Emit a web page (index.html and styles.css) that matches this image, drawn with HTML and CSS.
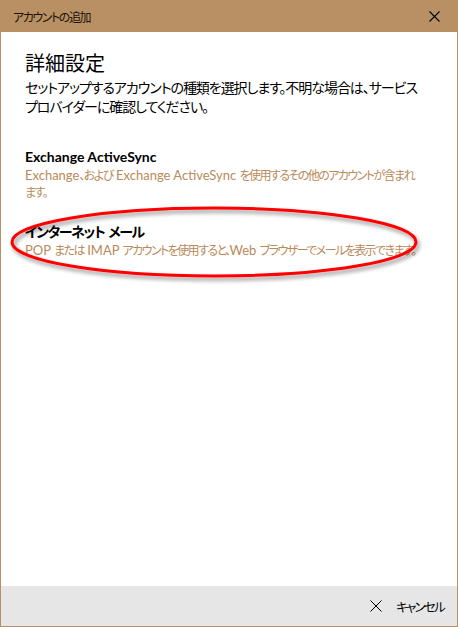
FILE: index.html
```html
<!DOCTYPE html>
<html lang="ja">
<head>
<meta charset="utf-8">
<link rel="stylesheet" href="styles.css">
</head>
<body>
<div class="window">
  <div class="titlebar">
    <span class="title">アカウントの追加</span>
    <svg class="close" width="11" height="11" viewBox="0 0 11 11"><path d="M0.5 0.5L10.5 10.5M10.5 0.5L0.5 10.5" stroke="#000" stroke-width="1.1" fill="none"/></svg>
  </div>
  <div class="content">
    <h1 class="heading">詳細設定</h1>
    <p class="intro">セットアップするアカウントの種類を選択します。不明な場合は、サービス プロバイダーに確認してください。</p>
    <div class="option">
      <div class="opt-title">Exchange ActiveSync</div>
      <div class="opt-desc">Exchange<span class="ja">、および</span> Exchange ActiveSync <span class="ja">を使用するその他のアカウントが含まれます。</span></div>
    </div>
    <div class="option option-mail">
      <div class="opt-title ja">インターネット メール</div>
      <div class="opt-desc">POP <span class="ja">または</span> IMAP <span class="ja">アカウントを使用すると、</span>Web <span class="ja">ブラウザーでメールを表示できます。</span></div>
      <svg class="ring" width="430" height="90" viewBox="0 0 430 90">
        <defs>
          <filter id="sh" x="-10%" y="-30%" width="120%" height="160%">
            <feGaussianBlur in="SourceAlpha" stdDeviation="2"/>
            <feOffset dx="2" dy="3" result="b"/>
            <feComponentTransfer><feFuncA type="linear" slope="0.45"/></feComponentTransfer>
            <feMerge><feMergeNode/><feMergeNode in="SourceGraphic"/></feMerge>
          </filter>
        </defs>
        <ellipse cx="213" cy="40" rx="202" ry="34" fill="none" stroke="#ff0000" stroke-width="3" filter="url(#sh)"/>
      </svg>
    </div>
  </div>
  <div class="footer">
    <div class="cancel">
      <svg width="12" height="12" viewBox="0 0 12 12"><path d="M0.5 0.5L11.5 11.5M11.5 0.5L0.5 11.5" stroke="#000" stroke-width="1" fill="none"/></svg>
      <span>キャンセル</span>
    </div>
  </div>
</div>
</body>
</html>
```

FILE: styles.css
```css
html, body {
  margin: 0;
  padding: 0;
  width: 458px;
  height: 627px;
  overflow: hidden;
  background: #fff;
}
body {
  font-family: Lato, "Noto Sans CJK JP", sans-serif;
  font-feature-settings: "palt";
  color: #000;
  line-break: anywhere;
}
.window {
  width: 458px;
  height: 627px;
  box-sizing: border-box;
  display: flex;
  flex-direction: column;
  border: 1px solid #b99064;
  border-top: none;
}
.titlebar {
  height: 32px;
  margin: 0 -1px;
  background: #b99064;
  display: flex;
  align-items: center;
  justify-content: space-between;
  padding: 0 18px 0 13px;
  flex-shrink: 0;
}
.title {
  font-size: 12px;
  letter-spacing: -0.12em;
  color: #1a1208;
}
.close { display: block; }
.content {
  flex: 1;
  padding: 18px 22px 0 24px;
}
.heading {
  font-size: 20px;
  font-weight: normal;
  margin: 0;
  line-height: 26px;
}
.intro {
  margin: 2px 8px 0 0;
  font-size: 14px;
  letter-spacing: -0.075em;
  word-spacing: 1px;
  line-height: 19px;
}
.option {
  margin-top: 31px;
  position: relative;
}
.option-mail { margin-top: 21px; }
.opt-title {
  font-size: 14px;
  font-weight: 700;
  line-height: 19px;
}
.opt-title.ja { letter-spacing: -0.1em; word-spacing: 2px; }
.opt-desc {
  font-size: 13px;
  line-height: 16px;
  color: #b98a5a;
  padding-right: 13px;
  margin-top: 1px;
}
.opt-desc .ja { font-size: 12px; letter-spacing: -0.13em; }
.ring {
  position: absolute;
  left: -24px;
  top: -20px;
  pointer-events: none;
}
.footer {
  height: 40px;
  background: #e6e6e6;
  display: flex;
  align-items: center;
  justify-content: flex-end;
  padding-right: 13px;
  flex-shrink: 0;
}
.cancel {
  display: flex;
  align-items: center;
  gap: 14px;
  font-size: 12.5px;
  letter-spacing: -0.14em;
}
.cancel svg { display: block; }
```
